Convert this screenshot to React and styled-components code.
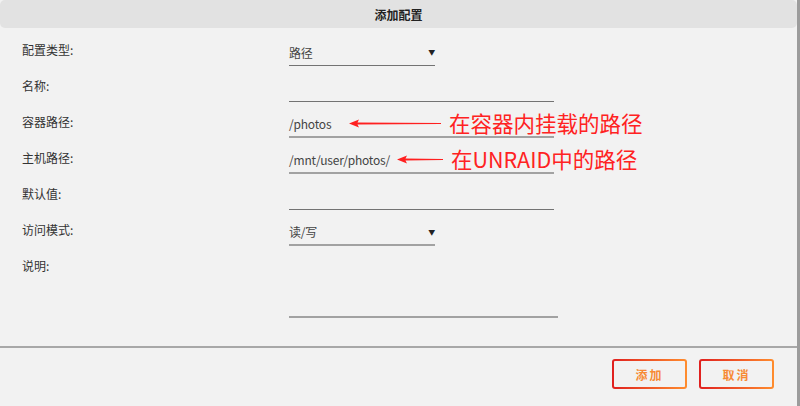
import styled, { createGlobalStyle } from "styled-components";

// Global page reset
const GlobalStyle = createGlobalStyle`
  html, body {
    margin: 0;
    padding: 0;
    background: #f2f2f2;
  }
  body {
    font-family: "Noto Sans CJK SC", "Noto Sans", sans-serif;
  }
`;

const Dialog = styled.div`
  width: 797px;
  height: 406px;

  display: flex;
  flex-direction: column;

  border-right: 3px solid #9c9c9c;
  background-color: #f2f2f2;
`;

const Header = styled.div`
  height: 28px;

  display: flex;
  align-items: center;
  justify-content: center;

  border-radius: 5px;
  background-color: #e2e2e2;

  font-size: 12px;
  font-weight: 700;
  color: #222;
`;

const Form = styled.div`
  margin-top: 2px;
  padding-left: 22px;

  display: flex;
  flex-direction: column;
`;

const Row = styled.div`
  height: ${({ $tall }) => ($tall ? "72px" : "36px")};

  display: grid;
  grid-template-columns: 267px 1fr;
`;

const Label = styled.span`
  padding-top: 10px;

  font-size: 12px;
  line-height: 20px;
  color: #333;
`;

const Field = styled.div`
  position: relative;
  align-self: end;

  width: ${({ $width }) => $width}px;
  height: ${({ $thick }) => ($thick ? "25px" : "26px")};

  display: flex;
  align-items: center;
  justify-content: space-between;

  border-bottom: ${({ $thick }) =>
    $thick ? "2px solid #a2a2a2" : "1px solid #737373"};

  font-size: 12px;
  letter-spacing: -0.2px;
  color: #444;
`;

const Arrow = styled.span`
  font-size: 7px;
  color: #222;
`;

const Note = styled.div`
  position: absolute;
  top: 0;
  left: ${({ $left }) => $left}px;

  display: flex;
  align-items: center;
  gap: 8px;

  font-size: 21.5px;
  line-height: 24px;
  letter-spacing: 0;
  color: #ff2222;
  white-space: nowrap;
`;

const Separator = styled.hr`
  margin: 28px 0 0 0;

  border: none;
  border-top: 2px solid #a8a8a8;
`;

const Footer = styled.div`
  padding: 11px 23px 0 0;

  display: flex;
  justify-content: flex-end;
  gap: 12px;
`;

const Button = styled.button`
  width: 75px;
  height: 30px;

  border: 2px solid transparent;
  border-radius: 3px;
  background: linear-gradient(#f2f2f2, #f2f2f2) padding-box,
    linear-gradient(90deg, #e0201f, #ff8d2e) border-box;

  font-family: "Noto Sans CJK SC", sans-serif;
  font-size: 12px;
  font-weight: 700;
  letter-spacing: 2px;
  color: #f78a35;
`;

function RedArrow({ width }) {
  return (
    <svg width={width} height="9" viewBox={`0 0 ${width} 9`}>
      <polygon
        points={`0,4.5 10,0.5 8.5,3.4 ${width},3.9 ${width},5.1 8.5,5.6 10,8.5`}
        fill="#ff2020"
      />
    </svg>
  );
}

// Function Main
export default function App() {
  return (
    <>
      <GlobalStyle />
      <Dialog>
        <Header>添加配置</Header>
        <Form>
          <Row>
            <Label>配置类型:</Label>
            <Field $width={146}>
              路径
              <Arrow>▼</Arrow>
            </Field>
          </Row>
          <Row>
            <Label>名称:</Label>
            <Field $width={265} />
          </Row>
          <Row>
            <Label>容器路径:</Label>
            <Field $width={265} $thick>
              /photos
              <Note $left={60}>
                <RedArrow width={92} />
                在容器内挂载的路径
              </Note>
            </Field>
          </Row>
          <Row>
            <Label>主机路径:</Label>
            <Field $width={265} $thick>
              /mnt/user/photos/
              <Note $left={108}>
                <RedArrow width={46} />
                在UNRAID中的路径
              </Note>
            </Field>
          </Row>
          <Row>
            <Label>默认值:</Label>
            <Field $width={265} />
          </Row>
          <Row>
            <Label>访问模式:</Label>
            <Field $width={146} $thick>
              读/写
              <Arrow>▼</Arrow>
            </Field>
          </Row>
          <Row $tall>
            <Label>说明:</Label>
            <Field $width={269} $thick />
          </Row>
        </Form>
        <Separator />
        <Footer>
          <Button>添加</Button>
          <Button>取消</Button>
        </Footer>
      </Dialog>
    </>
  );
}
